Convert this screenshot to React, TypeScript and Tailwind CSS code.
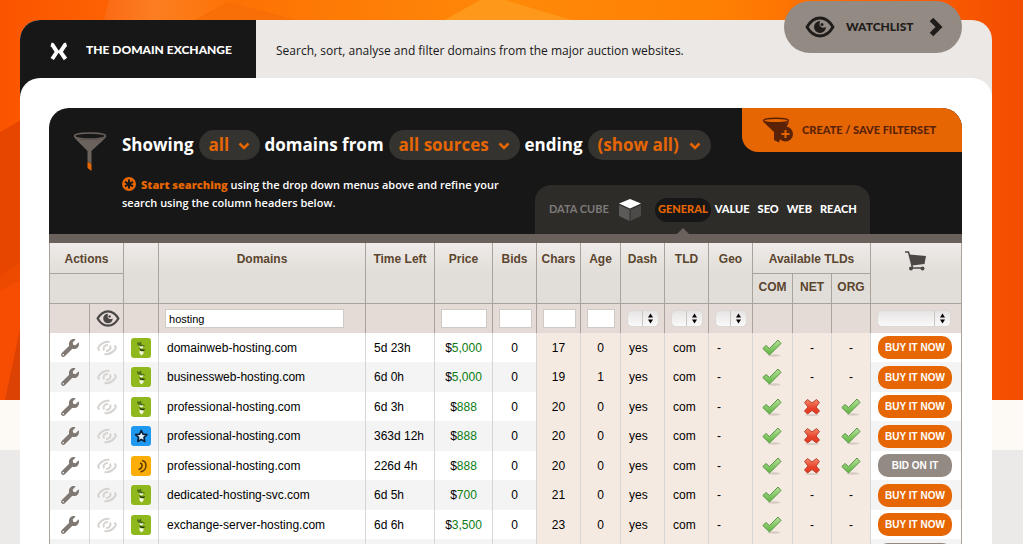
import { useState } from "react";
import type { ReactNode } from "react";
import { FaWrench } from "react-icons/fa";

type Source = "green" | "blue" | "yellow";
type Availability = "yes" | "no" | "-";

interface DomainRow {
  source: Source;
  name: string;
  time: string;
  price: string;
  chars: string;
  age: string;
  net: Availability;
  org: Availability;
  bid?: boolean;
}

const rows: DomainRow[] = [
  { source: "green", name: "domainweb-hosting.com", time: "5d 23h", price: "5,000", chars: "17", age: "0", net: "-", org: "-" },
  { source: "green", name: "businessweb-hosting.com", time: "6d 0h", price: "5,000", chars: "19", age: "1", net: "-", org: "-" },
  { source: "green", name: "professional-hosting.com", time: "6d 3h", price: "888", chars: "20", age: "0", net: "no", org: "yes" },
  { source: "blue", name: "professional-hosting.com", time: "363d 12h", price: "888", chars: "20", age: "0", net: "no", org: "yes" },
  { source: "yellow", name: "professional-hosting.com", time: "226d 4h", price: "888", chars: "20", age: "0", net: "no", org: "yes", bid: true },
  { source: "green", name: "dedicated-hosting-svc.com", time: "6d 5h", price: "700", chars: "21", age: "0", net: "-", org: "-" },
  { source: "green", name: "exchange-server-hosting.com", time: "6d 6h", price: "3,500", chars: "23", age: "0", net: "-", org: "-" },
];

const tabs = ["GENERAL", "VALUE", "SEO", "WEB", "REACH"];

export default function App() {
  return (
    <div className="relative isolate h-screen overflow-hidden bg-[#eceae8] font-['Open_Sans',sans-serif]">
      <Backdrop />
      <div className="pt-5 pr-[31px] pl-5">
        <Header />
        <main className="relative -mt-5 rounded-t-[20px] bg-white pt-[30px] pr-[30px] pl-[29px]">
          <FilterPanel />
          <DomainTable />
        </main>
      </div>
    </div>
  );
}

function Backdrop() {
  return (
    <div className="absolute inset-x-0 top-0 -z-10">
      <svg viewBox="0 0 1023 400" preserveAspectRatio="none" className="block h-[400px] w-full" aria-hidden="true">
        <defs>
          <linearGradient id="sky" x1="0" x2="1" y1="0" y2="0">
            <stop offset="0" stopColor="#fb5400" />
            <stop offset="0.25" stopColor="#fd7405" />
            <stop offset="0.5" stopColor="#ff8908" />
            <stop offset="0.7" stopColor="#ff8003" />
            <stop offset="0.92" stopColor="#f95a02" />
            <stop offset="1" stopColor="#f34d00" />
          </linearGradient>
          <linearGradient id="ray" x1="0" x2="1" y1="0" y2="0">
            <stop offset="0" stopColor="#fb6a14" />
            <stop offset="0.4" stopColor="#fc7e22" />
            <stop offset="1" stopColor="#fd7405" />
          </linearGradient>
        </defs>
        <rect width="1023" height="400" fill="url(#sky)" />
        <polygon points="109,0 230,0 193,21 104,21" fill="url(#ray)" />
        <polygon points="193,21 228,2 300,21" fill="#f86f08" />
        <polygon points="443,21 480,0 505,0 575,21" fill="#fd981a" />
        <polygon points="0,132 21,120 21,400 0,400" fill="#e64600" />
        <polygon points="0,275 21,262 21,400 0,400" fill="#ed4a00" />
        <polygon points="0,291 21,280 21,330 5,400 0,400" fill="#f64d02" />
        <polygon points="21,325 21,400 5,400" fill="#db4203" />
      </svg>
      <div className="h-[50px] bg-[#fdf9f4]" />
    </div>
  );
}

function Header() {
  return (
    <header className="relative flex h-[78px] rounded-t-[20px] bg-[#ece8e5]">
      <div className="flex w-[236px] items-start rounded-tl-[20px] bg-[#171717] pt-[19px] pl-[29px]">
        <svg viewBox="0 0 20 20" className="mt-[3px] size-5 shrink-0 text-white" fill="none" stroke="currentColor" strokeWidth="4" aria-hidden="true">
          <path d="M2 2.500 3.500 3 8 9.800 3.200 17M17.500 2.500 16 3 11.500 9.800 16.500 17" />
          <path d="M7 9.800h5" strokeWidth="2" />
        </svg>
        <h1 className="ml-[17px] font-['Lato',sans-serif] text-[12px] leading-[22px] font-black whitespace-nowrap text-white">
          THE DOMAIN EXCHANGE
        </h1>
      </div>
      <p className="pt-[21px] pl-5 text-[12px] leading-5 text-[#171717]">
        Search, sort, analyse and filter domains from the major auction websites.
      </p>
      <a
        href="#watchlist"
        className="absolute -top-[19px] right-[30px] flex h-[52px] w-[178px] items-center rounded-[26px] bg-[#938a84] pl-[21px] text-[#1f1c1a]"
      >
        <Eye className="h-[22px] w-[30px] shrink-0" />
        <span className="ml-[11px] w-[76px] font-['Lato',sans-serif] text-[12px] leading-5 font-black">
          WATCHLIST
        </span>
        <svg viewBox="0 0 14 20" className="ml-[7px] h-5 w-[14px]" fill="none" stroke="currentColor" strokeWidth="5" aria-hidden="true">
          <path d="M2.500 2.500 10 10l-7.500 7.500" />
        </svg>
      </a>
    </header>
  );
}

function FilterPanel() {
  const [active, setActive] = useState("GENERAL");

  return (
    <section className="flex h-[135px] rounded-t-[20px] border-b-[9px] border-[#6b615c] bg-[#171717]">
      <div className="w-[73px] shrink-0 pt-6 pl-6">
        <svg viewBox="0 0 34 40" className="h-10 w-[34px]" aria-hidden="true">
          <path d="M1 5.500 14.500 19v10l4 3V19L33 5.500c-5 3-27 3-32 0Z" fill="#6b625d" />
          <ellipse cx="17" cy="4" rx="15.500" ry="3" fill="#171717" stroke="#6b625d" strokeWidth="1.500" />
          <path d="m14.500 29.500 4 2.500v7l-4-3z" fill="#e66604" />
        </svg>
      </div>
      <div className="flex flex-1 flex-col justify-between">
        <div className="flex items-start justify-between">
          <div className="flex items-center gap-[5px] pt-[22px] text-[17px] leading-[30px] font-bold whitespace-nowrap text-white">
            <span>Showing</span>
            <PillSelect label="Domain type" width="w-[61px]" value="all" />
            <span>domains from</span>
            <PillSelect label="Source" width="w-[131px]" value="all sources" />
            <span>ending</span>
            <PillSelect label="Ending" width="w-[123px]" value="(show all)" />
          </div>
          <button
            type="button"
            className="flex h-11 w-[220px] items-center rounded-tr-[20px] rounded-bl-2xl bg-[#e66604] pl-5 text-[#5a2206]"
          >
            <svg viewBox="0 0 32 26" className="h-[26px] w-8 shrink-0" aria-hidden="true">
              <path d="M1 4.500 12 15v8l5 2.500 3-10L29 4.500c-6 2-22 2-28 0Z" fill="currentColor" />
              <path d="M28 3h4v8h-8z" fill="#e66604" />
              <ellipse cx="14" cy="3.500" rx="12.500" ry="2.300" fill="#e66604" stroke="currentColor" strokeWidth="1.400" />
              <circle cx="23.500" cy="17" r="7.500" fill="currentColor" />
              <path d="M23.500 13v8M19.500 17h8" stroke="#e66604" strokeWidth="2" />
            </svg>
            <span className="ml-2 font-['Lato',sans-serif] text-[11px] font-black whitespace-nowrap">
              CREATE / SAVE FILTERSET
            </span>
          </button>
        </div>
        <div className="flex items-start justify-between pr-[92px]">
          <p className="-mt-[9px] text-[11px] leading-[18px] font-semibold whitespace-nowrap text-white">
            <svg viewBox="0 0 14 14" className="mr-[5px] inline size-[14px] align-[-2px]" aria-hidden="true">
              <circle cx="7" cy="7" r="7" fill="#e66604" />
              <path d="M7 2.500v9M3 4.800l8 4.500M11 4.800 3 9.300" stroke="#171717" strokeWidth="2" />
            </svg>
            <strong className="font-extrabold text-[#e66604]">Start searching</strong> using the drop down menus above and refine your
            <br />
            search using the column headers below.
          </p>
          <nav className="flex h-[49px] w-[335px] items-center rounded-t-[16px] bg-[#2e2c29] pl-[14px] font-['Lato',sans-serif] text-[11px] font-black whitespace-nowrap">
            <span className="w-[70px] font-bold text-[#7d7b78]">DATA CUBE</span>
            <svg viewBox="0 0 22 22" className="mr-[14px] h-[22px] w-[22px] shrink-0" aria-hidden="true">
              <path d="m11 0 11 4.500-11 5-11-5z" fill="#fff" />
              <path d="m0 6 10.500 4.500V22L0 17z" fill="#5c5a58" />
              <path d="m22 6-10.500 4.500V22L22 17z" fill="#4c4a49" />
            </svg>
            {tabs.map((tab) => (
              <button
                key={tab}
                type="button"
                onClick={() => setActive(tab)}
                className={
                  tab === active
                    ? "relative h-6 rounded-xl bg-[#171717] px-[3px] text-[#e66604]"
                    : "h-6 px-1 text-white"
                }
              >
                {tab}
                {tab === active && (
                  <svg viewBox="0 0 14 7" className="absolute top-[30px] left-1/2 h-[7px] w-[14px] -translate-x-1/2" aria-hidden="true">
                    <path d="m7 0 7 7H0z" fill="#6b615c" />
                  </svg>
                )}
              </button>
            ))}
          </nav>
        </div>
      </div>
    </section>
  );
}

function PillSelect({ label, width, value }: { label: string; width: string; value: string }) {
  return (
    <span className={`relative ${width}`}>
      <select
        aria-label={label}
        className="block h-[30px] w-full appearance-none rounded-full bg-[#35332f] pl-[10px] text-[17px] font-bold text-[#e66604]"
      >
        <option>{value}</option>
      </select>
      <svg
        viewBox="0 0 12 8"
        className="pointer-events-none absolute top-3 right-[10px] h-2 w-3 text-[#e66604]"
        fill="none"
        stroke="currentColor"
        strokeWidth="2.500"
        aria-hidden="true"
      >
        <path d="m1.500 1.500 4.500 4.500 4.500-4.500" />
      </svg>
    </span>
  );
}

function DomainTable() {
  return (
    <table className="w-full table-fixed border-separate border-spacing-0 border-l border-[#aaa39c] font-['Liberation_Sans',sans-serif] text-xs leading-4 text-black">
      <colgroup>
        <col className="w-10" />
        <col className="w-[34px]" />
        <col className="w-[35px]" />
        <col />
        <col className="w-[69px]" />
        <col className="w-[58px]" />
        <col className="w-11" />
        <col className="w-11" />
        <col className="w-10" />
        <col className="w-11" />
        <col className="w-11" />
        <col className="w-11" />
        <col className="w-10" />
        <col className="w-[39px]" />
        <col className="w-[39px]" />
        <col className="w-[91px]" />
      </colgroup>
      <thead className="text-[#5b452f]">
        <tr className="h-[31px]">
          <HeadCell colSpan={2}>Actions</HeadCell>
          <HeadCell rowSpan={2} />
          <HeadCell rowSpan={2}>Domains</HeadCell>
          <HeadCell rowSpan={2}>Time Left</HeadCell>
          <HeadCell rowSpan={2}>Price</HeadCell>
          <HeadCell rowSpan={2}>Bids</HeadCell>
          <HeadCell rowSpan={2}>Chars</HeadCell>
          <HeadCell rowSpan={2}>Age</HeadCell>
          <HeadCell rowSpan={2}>Dash</HeadCell>
          <HeadCell rowSpan={2}>TLD</HeadCell>
          <HeadCell rowSpan={2}>Geo</HeadCell>
          <HeadCell colSpan={3}>Available TLDs</HeadCell>
          <HeadCell rowSpan={2}>
            <Cart />
          </HeadCell>
        </tr>
        <tr className="h-[30px]">
          <SubHeadCell colSpan={2} />
          <SubHeadCell>COM</SubHeadCell>
          <SubHeadCell>NET</SubHeadCell>
          <SubHeadCell>ORG</SubHeadCell>
        </tr>
        <tr className="h-[29px] text-left">
          <FilterCell />
          <FilterCell>
            <Eye className="h-[19px] w-6 text-[#4a4745]" />
          </FilterCell>
          <FilterCell />
          <FilterCell>
            <FilterInput label="Domains" width="w-[179px]" value="hosting" />
          </FilterCell>
          <FilterCell />
          <FilterCell>
            <FilterInput label="Price" width="w-[46px]" />
          </FilterCell>
          <FilterCell>
            <FilterInput label="Bids" width="w-[33px]" />
          </FilterCell>
          <FilterCell>
            <FilterInput label="Chars" width="w-[33px]" />
          </FilterCell>
          <FilterCell>
            <FilterInput label="Age" width="w-7" />
          </FilterCell>
          <FilterCell>
            <FilterSelect label="Dash" width="w-8" />
          </FilterCell>
          <FilterCell>
            <FilterSelect label="TLD" width="w-8" />
          </FilterCell>
          <FilterCell>
            <FilterSelect label="Geo" width="w-8" />
          </FilterCell>
          <FilterCell />
          <FilterCell />
          <FilterCell />
          <FilterCell>
            <FilterSelect label="Sale type" width="w-[74px]" />
          </FilterCell>
        </tr>
      </thead>
      <tbody>
        {rows.map((row, i) => (
          <tr key={i} className="odd:h-[29px] even:h-[30px] even:bg-[#f4f4f4]">
            <Cell center>
              <FaWrench className="mx-auto size-[18px] text-[#7f7872]" />
            </Cell>
            <Cell center>
              <FadedEye />
            </Cell>
            <Cell center>
              <SourceIcon source={row.source} />
            </Cell>
            <Cell>{row.name}</Cell>
            <Cell>{row.time}</Cell>
            <Cell center>
              $<span className="text-[#0b7d12]">{row.price}</span>
            </Cell>
            <Cell center>0</Cell>
            <Cell center tint>{row.chars}</Cell>
            <Cell center tint>{row.age}</Cell>
            <Cell tint>yes</Cell>
            <Cell tint>com</Cell>
            <Cell tint>-</Cell>
            <Cell center tint>
              <Mark value="yes" />
            </Cell>
            <Cell center tint>
              <Mark value={row.net} />
            </Cell>
            <Cell center tint>
              <Mark value={row.org} />
            </Cell>
            <td className="border-r border-[#aaa39c] p-0 pl-[7px]">
              <BuyButton bid={row.bid} />
            </td>
          </tr>
        ))}
        <tr className="h-[30px] even:bg-[#f4f4f4]">
          <Cell />
          <Cell />
          <Cell />
          <Cell />
          <Cell />
          <Cell />
          <Cell />
          <Cell tint />
          <Cell tint />
          <Cell tint />
          <Cell tint />
          <Cell tint />
          <Cell tint />
          <Cell tint />
          <Cell tint />
          <td className="border-r border-[#aaa39c] p-0 pl-[7px]">
            <button type="button" aria-label="Bid on it" className="block h-[23px] w-[74px] rounded-[10px] bg-[#938a84]" />
          </td>
        </tr>
      </tbody>
    </table>
  );
}

function HeadCell({ children, colSpan, rowSpan }: { children?: ReactNode; colSpan?: number; rowSpan?: number }) {
  return (
    <th
      colSpan={colSpan}
      rowSpan={rowSpan}
      className="border-r border-b border-[#aaa39c] bg-[linear-gradient(#eeebe9,#e1ded9_30px)] p-0 pt-2 align-top font-bold whitespace-nowrap"
    >
      {children}
    </th>
  );
}

function SubHeadCell({ children, colSpan }: { children?: ReactNode; colSpan?: number }) {
  return (
    <th colSpan={colSpan} className="border-r border-b border-[#aaa39c] bg-[#e1ded9] p-0 pt-[5px] align-top font-bold">
      {children}
    </th>
  );
}

function FilterCell({ children }: { children?: ReactNode }) {
  return <td className="border-r border-[#aaa39c] bg-[#e4dbd6] p-0 pl-[6px]">{children}</td>;
}

function FilterInput({ label, width, value }: { label: string; width: string; value?: string }) {
  return (
    <input
      type="text"
      aria-label={label}
      defaultValue={value}
      className={`block h-[19px] border border-[#cfcac6] bg-white px-[3px] text-[11px] text-black ${width}`}
    />
  );
}

function FilterSelect({ label, width }: { label: string; width: string }) {
  return (
    <span className={`relative block ${width}`}>
      <select
        aria-label={label}
        className="block h-[17px] w-full appearance-none rounded-[5px] border border-[#dcd8d5] bg-linear-to-b from-[#e6e4e3] to-[#fafafa]"
      >
        <option value=""></option>
      </select>
      <svg viewBox="0 0 17 17" className="pointer-events-none absolute top-0 right-0 size-[17px]" aria-hidden="true">
        <path d="M.5 1v15" stroke="#c9c6c4" />
        <path d="m8.500 3.500 2.500 4H6zM8.500 13.500l2.500-4H6z" fill="#000" />
      </svg>
    </span>
  );
}

function Cell({ children, center, tint }: { children?: ReactNode; center?: boolean; tint?: boolean }) {
  return (
    <td
      className={`border-r border-[#d8d6d4] p-0 whitespace-nowrap ${center ? "text-center" : "pl-2"} ${tint ? "bg-[#f5eae1]" : ""}`}
    >
      {children}
    </td>
  );
}

function BuyButton({ bid }: { bid?: boolean }) {
  return (
    <button
      type="button"
      className={`block h-[23px] w-[74px] rounded-[10px] text-[10px] leading-[23px] font-bold whitespace-nowrap text-white ${bid ? "bg-[#938a84]" : "bg-[#e66604]"}`}
    >
      {bid ? "BID ON IT" : "BUY IT NOW"}
    </button>
  );
}

function Eye({ className }: { className: string }) {
  return (
    <svg viewBox="0 0 30 22" className={className} fill="none" stroke="currentColor" aria-hidden="true">
      <path d="M2 11C5.500 5 10 2 15 2s9.500 3 13 9c-3.500 6-8 9-13 9S5.500 17 2 11Z" strokeWidth="2.800" strokeLinejoin="round" />
      <path d="M15 5a6 6 0 1 0 6 6c-2.500 1.500-6.500.500-6.500-2.500 0-1.500.500-2.500.500-3.500Z" fill="currentColor" stroke="none" />
      <circle cx="17" cy="8.500" r="1.500" fill="currentColor" stroke="none" />
    </svg>
  );
}

function FadedEye() {
  return (
    <svg viewBox="0 0 20 16" className="mx-auto h-4 w-5" fill="none" stroke="#d6d3d0" strokeWidth="2" aria-hidden="true">
      <path d="M2.500 10.500C.500 8.500 1 7.500 2.500 6 5.500 2.500 8.500 1.300 12.500 2M17.500 5.500c2 2 1.500 3 0 4.500-3 3.500-6 4.700-10 4" />
      <path d="M7 10.500C5.500 7.500 7.500 5 11 5M13 5.500c1.500 3-.500 5.500-4 5.500" />
    </svg>
  );
}

function SourceIcon({ source }: { source: Source }) {
  return (
    <svg viewBox="0 0 20 20" className="mx-auto size-5" aria-hidden="true">
      {source === "green" && (
        <>
          <rect width="20" height="20" rx="3" fill="#8fb81c" />
          <path d="m6 4 2 1 2-1.500.500 3 4 1.500-2 .800L9 8.500 6.500 7z" fill="#4d6e15" />
          <path d="m8 7.500 2 1.200L12.500 8l-1 2-2 .500z" fill="#fff" />
          <path d="m8.500 10 2 1.500h4l-2.500 2-3-1z" fill="#22350c" />
          <path d="m8.500 12.500 2.500 1 1.500-.500v2.500l-2 2-2-2z" fill="#f3f8dc" />
        </>
      )}
      {source === "blue" && (
        <>
          <rect width="20" height="20" rx="3" fill="#1f98f2" />
          <path
            d="m10.300 4.500 1.700 3.700 4 .500-3 2.700.800 4-3.500-2-3.500 2 .800-4-3-2.700 4-.500z"
            fill="#dff0ff"
            stroke="#0b2138"
            strokeWidth="1.700"
            strokeLinejoin="round"
          />
        </>
      )}
      {source === "yellow" && (
        <>
          <rect width="20" height="20" rx="3" fill="#fdae06" />
          <path d="M11 4.500c5.500 1 5.500 10-1.500 11.500M9 7c3 .500 3 5.500-1.500 6.500" fill="none" stroke="#5a3c05" strokeWidth="1.500" />
        </>
      )}
    </svg>
  );
}

function Mark({ value }: { value: Availability }) {
  if (value === "-") return <>-</>;
  if (value === "no") {
    return (
      <svg viewBox="0 0 18 18" className="mx-auto size-[18px]" role="img" aria-label="Taken">
        <defs>
          <linearGradient id="red" x1="0" x2="0" y1="0" y2="1">
            <stop offset="0" stopColor="#f58a6a" />
            <stop offset="0.6" stopColor="#e8412a" />
            <stop offset="1" stopColor="#e23a22" />
          </linearGradient>
        </defs>
        <ellipse cx="9" cy="17" rx="7" ry="1" fill="#d9cfc8" />
        <path
          d="M4.500 1.500 9 5l4.500-3.500 3 3L13 9l3.500 4-3 3L9 12.500 4.500 16l-3-3L5 9 1.500 4.500z"
          fill="url(#red)"
          stroke="#b8402c"
          strokeLinejoin="round"
        />
      </svg>
    );
  }
  return (
    <svg viewBox="0 0 20 18" className="mx-auto h-[18px] w-5" role="img" aria-label="Available">
      <defs>
        <linearGradient id="leaf" x1="0" x2="0" y1="0" y2="1">
          <stop offset="0" stopColor="#b5e09a" />
          <stop offset="1" stopColor="#5fb540" />
        </linearGradient>
      </defs>
      <ellipse cx="12" cy="16.500" rx="6.500" ry="1.200" fill="#d5cbc3" />
      <path
        d="M.8 9.500 4 6.500l3.500 3L16 1l3 3.500L7.500 16z"
        fill="url(#leaf)"
        stroke="#5d9548"
        strokeLinejoin="round"
      />
    </svg>
  );
}

function Cart() {
  return (
    <svg viewBox="0 0 22 20" className="mx-auto h-5 w-[22px]" role="img" aria-label="Buy" fill="#4c4744">
      <path d="M4.500 3.500 21 5l-1.500 8L7 14.500z" />
      <path d="M0 1h3.500L7.500 16.500" fill="none" stroke="#4c4744" strokeWidth="1.500" />
      <path d="M6 17h12" stroke="#4c4744" strokeWidth="1.500" />
      <circle cx="6" cy="17.500" r="2" />
      <circle cx="17.500" cy="17.500" r="2" />
    </svg>
  );
}
